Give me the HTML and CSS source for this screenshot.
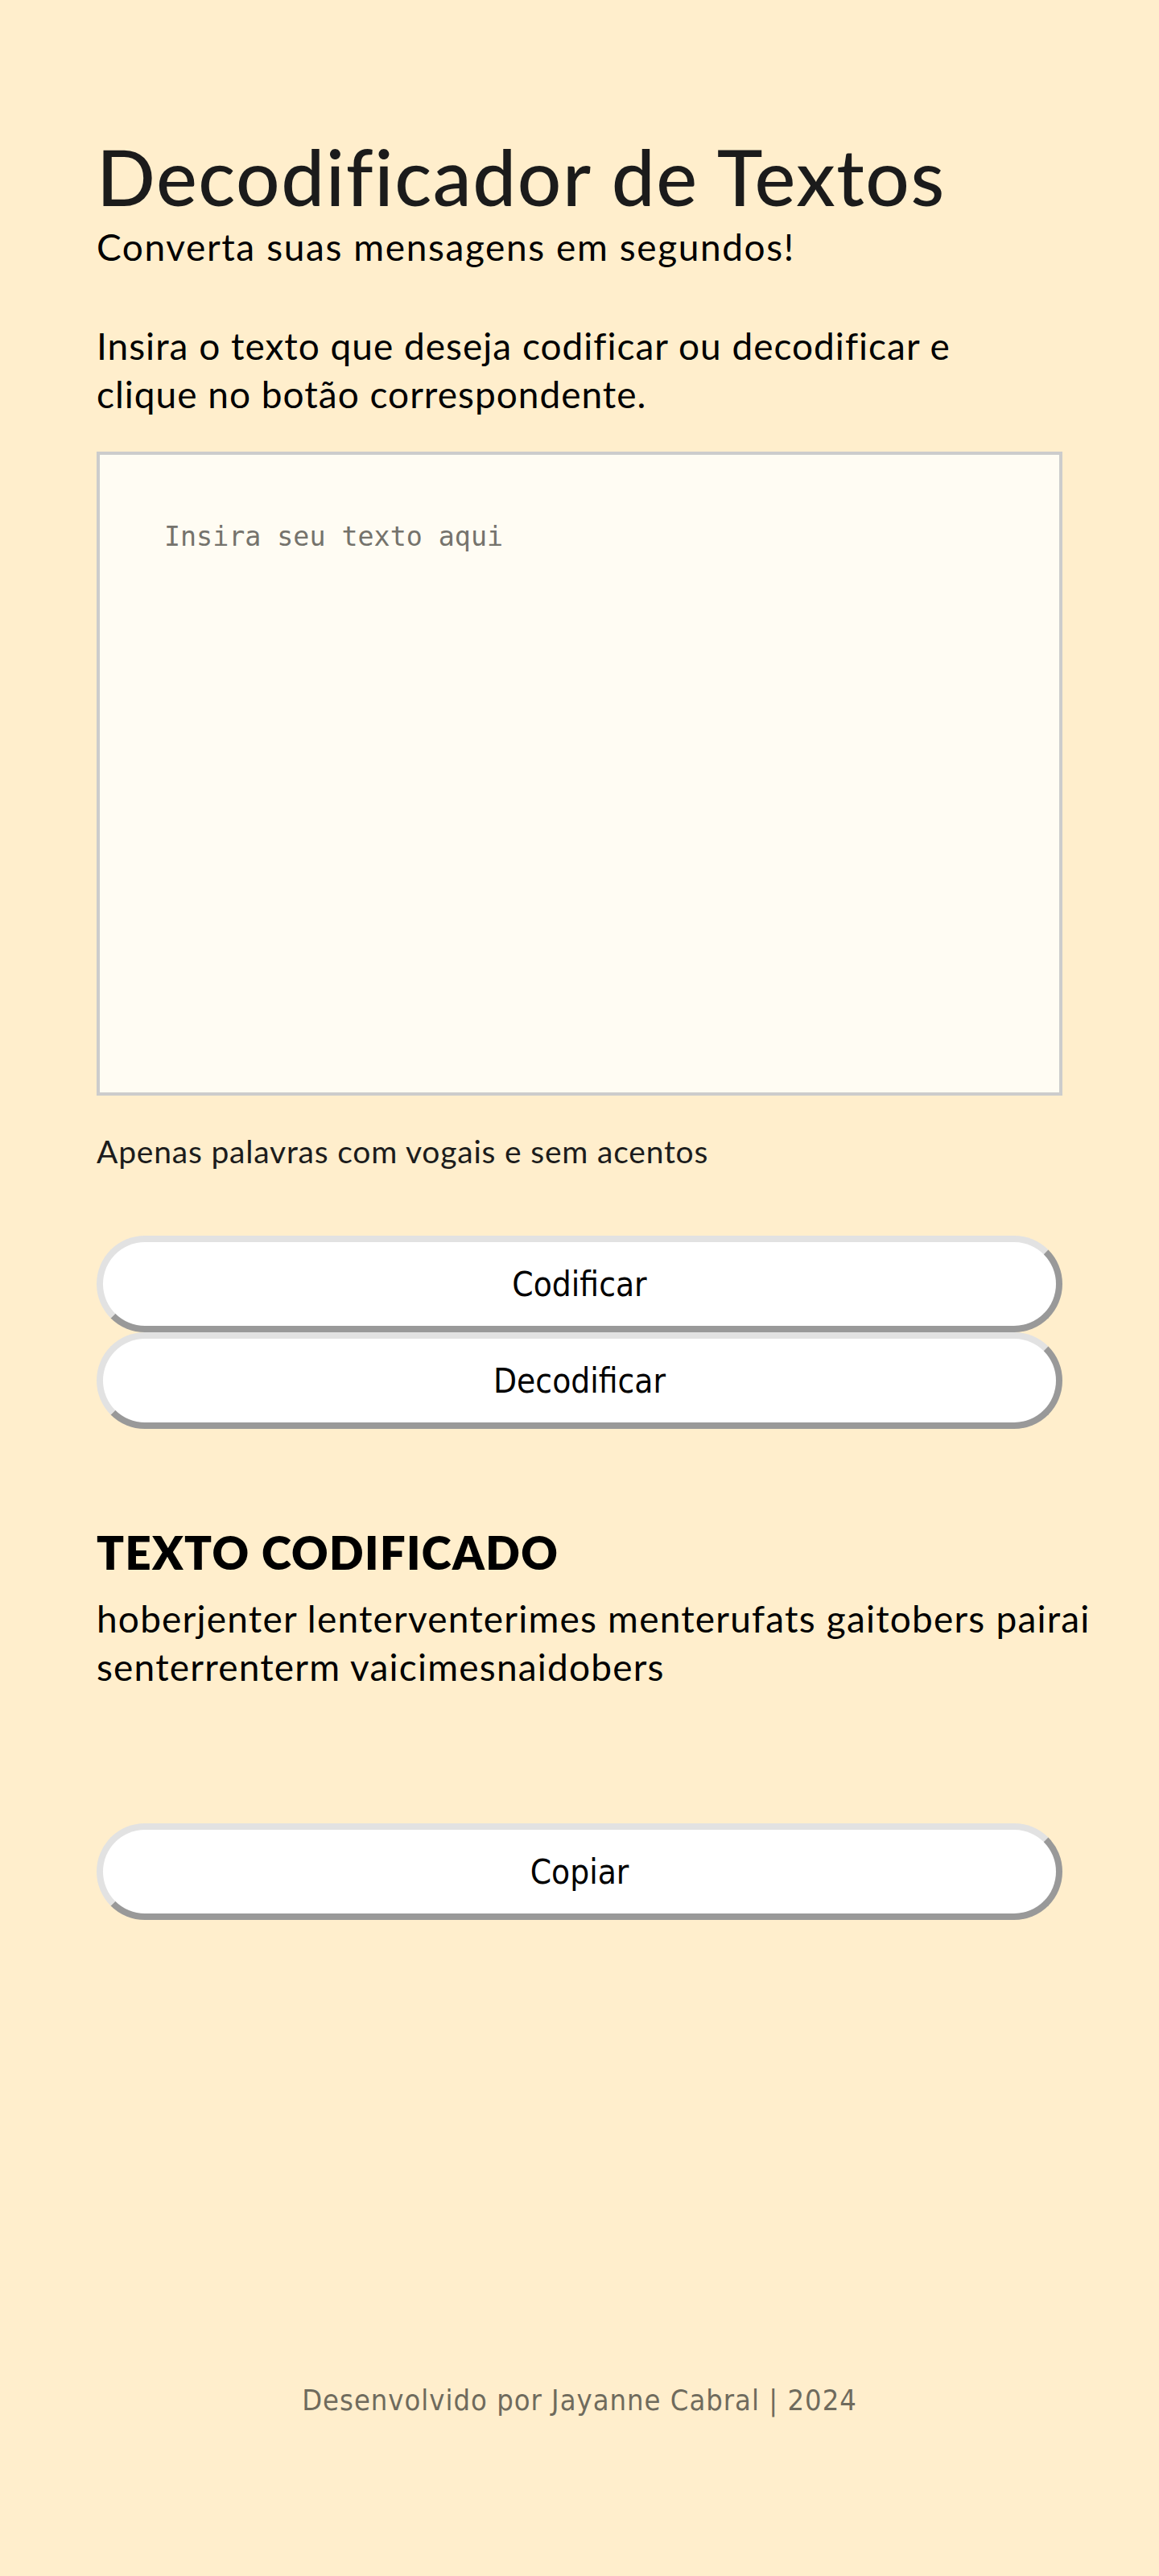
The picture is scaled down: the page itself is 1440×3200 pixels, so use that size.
FILE: index.html
```html
<!DOCTYPE html>
<html lang="pt-BR">
<head>
<meta charset="utf-8">
<title>Decodificador de Textos</title>
<link rel="stylesheet" href="styles.css">
</head>
<body>
<main class="page">
  <section class="input-section">
    <h1 class="title">Decodificador de Textos</h1>
    <p class="subtitle">Converta suas mensagens em segundos!</p>
    <p class="instructions">Insira o texto que deseja codificar ou decodificar e clique no botão correspondente.</p>
    <textarea class="text-input" placeholder="Insira seu texto aqui"></textarea>
    <p class="hint">Apenas palavras com vogais e sem acentos</p>
    <div class="actions">
      <button class="btn">Codificar</button>
      <button class="btn">Decodificar</button>
    </div>
  </section>
  <section class="output-section">
    <h2 class="output-title">TEXTO CODIFICADO</h2>
    <p class="output-text">hoberjenter lenterventerimes menterufats gaitobers pairai senterrenterm vaicimesnaidobers</p>
    <button class="btn btn-copy">Copiar</button>
  </section>
</main>
<footer class="footer">Desenvolvido por Jayanne Cabral | 2024</footer>
</body>
</html>
```

FILE: styles.css
```css
html, body {
  margin: 0;
  padding: 0;
}

body {
  background: #ffeecc;
  font-family: "Lato", "Noto Sans", sans-serif;
  color: #111;
  min-height: 3200px;
}

.page {
  width: 1200px;
  padding: 163px 0 0 120px;
  box-sizing: content-box;
}

.title {
  margin: 0;
  font-size: 96px;
  line-height: 112px;
  font-weight: 500;
  color: #1b1b1b;
  letter-spacing: 1.6px;
}

.subtitle {
  margin: 5px 0 0;
  font-size: 46px;
  line-height: 53px;
  letter-spacing: 1.6px;
  color: #000;
}

.instructions {
  margin: 67px 0 0;
  font-size: 46px;
  line-height: 60px;
  letter-spacing: 1px;
  color: #000;
  max-width: 1130px;
}

.text-input {
  display: block;
  margin-top: 41px;
  width: 100%;
  height: 800px;
  box-sizing: border-box;
  border: 4px solid #cccccc;
  background: #fffcf3;
  padding: 82px 80px;
  font-family: "DejaVu Sans Mono", monospace;
  font-size: 33.3px;
  color: #333;
  resize: none;
  outline: none;
}

.text-input::placeholder {
  color: #75736c;
}

.hint {
  margin: 46px 0 0;
  font-size: 39px;
  line-height: 46px;
  letter-spacing: 0.8px;
  color: #1c1c1c;
}

.actions {
  margin-top: 82px;
  display: flex;
  flex-direction: column;
}

.btn {
  display: block;
  width: 100%;
  height: 120px;
  box-sizing: border-box;
  border: 8px solid;
  border-color: #e2e2e2 #999999 #999999 #e2e2e2;
  border-radius: 60px;
  background: #ffffff;
  font-family: "DejaVu Sans Condensed", "DejaVu Sans", sans-serif;
  font-stretch: condensed;
  font-size: 42px;
  color: #000;
  cursor: pointer;
  padding: 0;
}

.output-section {
  margin-top: 122px;
}

.output-title {
  margin: 0;
  font-size: 56px;
  line-height: 64px;
  font-weight: 800;
  letter-spacing: 1.4px;
  color: #000;
}

.output-text {
  margin: 20px 0 0;
  width: 1320px;
  font-size: 46px;
  line-height: 60px;
  letter-spacing: 1.2px;
  color: #000;
}

.btn-copy {
  margin-top: 164px;
}

.footer {
  margin-top: 576px;
  text-align: center;
  font-family: "DejaVu Sans Condensed", "DejaVu Sans", sans-serif;
  font-stretch: condensed;
  font-size: 36px;
  letter-spacing: 1px;
  color: #6f6b5d;
}
```
